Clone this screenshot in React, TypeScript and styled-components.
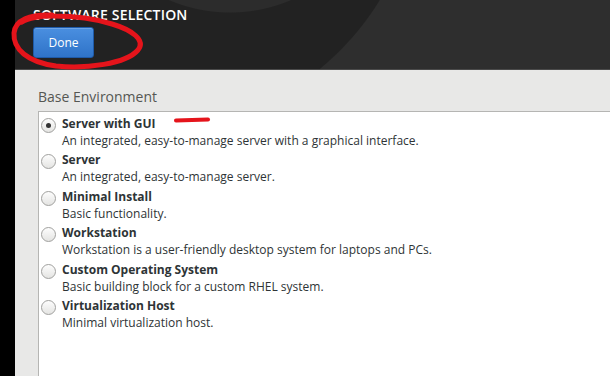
import React from "react";
import styled, { createGlobalStyle } from "styled-components";

const GlobalStyle = createGlobalStyle`
    html, body {
        margin: 0;
        padding: 0;
        background: #000;
    }
    body {
        font-family: "Open Sans", "Noto Sans", "DejaVu Sans", sans-serif;
    }
`;

const Page = styled.div`
    position: relative;
    display: flex;
    width: 610px;
    height: 376px;
    overflow: hidden;
`;

const LeftStrip = styled.div`
    width: 15px;
    flex-shrink: 0;
    background: #000;
`;

const Main = styled.div`
    flex: 1;
    display: flex;
    flex-direction: column;
    min-width: 0;
`;

const Header = styled.div`
    height: 69px;
    flex-shrink: 0;
    box-sizing: border-box;
    padding: 6px 0 0 18px;
    display: flex;
    flex-direction: column;
    align-items: flex-start;
    gap: 3px;
    background:
        radial-gradient(circle at 215px -143px, #2c2c2c 0 155px, transparent 156px),
        radial-gradient(circle at 130px -144px, #222 0 275px, transparent 276px),
        #2e2e2e;
`;

const Title = styled.div`
    color: #fff;
    font-size: 14px;
    font-weight: 600;
    letter-spacing: 0.2px;
    line-height: 18px;
`;

const DoneButton = styled.button`
    width: 61px;
    height: 31px;
    border: 1px solid #1e5aa8;
    border-radius: 3px;
    background: linear-gradient(#4a8fe0, #2f73c8);
    color: #fff;
    font-family: inherit;
    font-size: 12px;
    padding: 0;
    box-shadow: inset 0 1px 0 rgba(255, 255, 255, 0.2);
`;

const Content = styled.div`
    flex: 1;
    display: flex;
    flex-direction: column;
    background: #e8e8e7;
    border-top: 1px solid #4a4a4a;
    padding: 18px 0 0 23px;
`;

const SectionTitle = styled.div`
    color: #555753;
    font-size: 14px;
    line-height: 18px;
    margin-bottom: 5px;
`;

const ListBox = styled.div`
    flex: 1;
    background: #fff;
    border-top: 1px solid #b5b5b3;
    border-left: 1px solid #b5b5b3;
    padding-top: 3px;
`;

const Option = styled.div`
    display: grid;
    grid-template-columns: 23px 1fr;
    height: 36.4px;
`;

const Radio = styled.div<{ checked?: boolean }>`
    width: 13px;
    height: 13px;
    margin: 3px 0 0 2px;
    border-radius: 50%;
    border: 1px solid #a0a09e;
    background: linear-gradient(#fdfdfd, #e4e4e2);
    display: flex;
    align-items: center;
    justify-content: center;
    &::after {
        content: "";
        width: 5px;
        height: 5px;
        border-radius: 50%;
        background: #333;
        display: ${({ checked }) => (checked ? "block" : "none")};
    }
`;

const Texts = styled.div`
    display: flex;
    flex-direction: column;
    color: #2e3436;
    font-size: 12px;
    line-height: 17px;
`;

const Label = styled.div`
    font-weight: 700;
`;

const Desc = styled.div``;

const Annotations = styled.svg`
    position: absolute;
    left: 0;
    top: 0;
    pointer-events: none;
`;

const options = [
    { label: "Server with GUI", desc: "An integrated, easy-to-manage server with a graphical interface.", checked: true },
    { label: "Server", desc: "An integrated, easy-to-manage server." },
    { label: "Minimal Install", desc: "Basic functionality." },
    { label: "Workstation", desc: "Workstation is a user-friendly desktop system for laptops and PCs." },
    { label: "Custom Operating System", desc: "Basic building block for a custom RHEL system." },
    { label: "Virtualization Host", desc: "Minimal virtualization host." },
];

const App: React.FC = () => {
    return (
        <>
            <GlobalStyle />
            <Page>
                <LeftStrip />
                <Main>
                    <Header>
                        <Title>SOFTWARE SELECTION</Title>
                        <DoneButton>Done</DoneButton>
                    </Header>
                    <Content>
                        <SectionTitle>Base Environment</SectionTitle>
                        <ListBox>
                            {options.map((o) => (
                                <Option key={o.label}>
                                    <Radio checked={o.checked} />
                                    <Texts>
                                        <Label>{o.label}</Label>
                                        <Desc>{o.desc}</Desc>
                                    </Texts>
                                </Option>
                            ))}
                        </ListBox>
                    </Content>
                </Main>
                <Annotations width="610" height="376" viewBox="0 0 610 376">
                    <path
                        d="M52 15 C30 14 15 20 14 33 C13 49 27 62 56 66 C86 69 126 64 138 50 C146 40 132 30 112 24 C96 19 76 16 54 16 C40 16 28 18 22 22"
                        fill="none"
                        stroke="#e5141b"
                        strokeWidth="5"
                        strokeLinecap="round"
                    />
                    <path d="M176 120.5 L208 119.5" stroke="#e5141b" strokeWidth="4" strokeLinecap="round" />
                </Annotations>
            </Page>
        </>
    );
};

export default App;
